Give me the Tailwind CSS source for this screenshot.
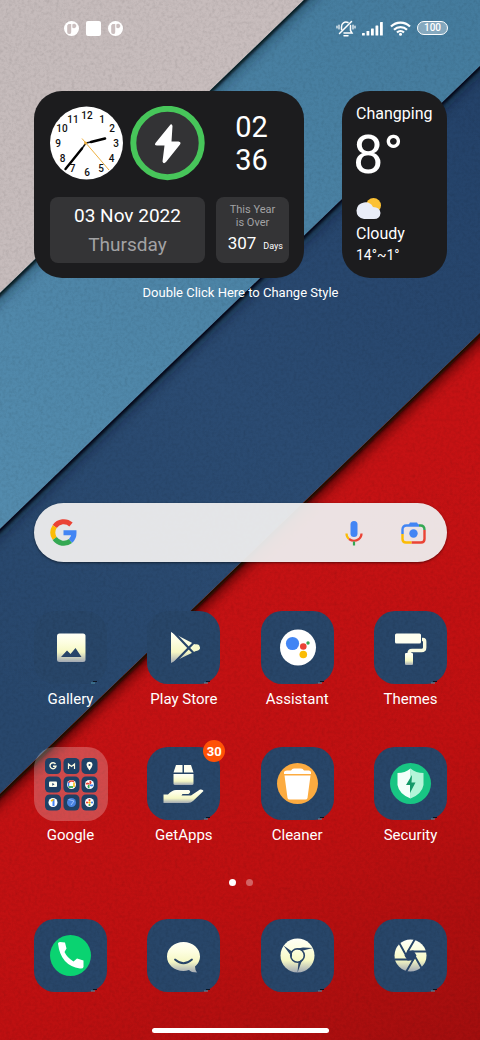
<!DOCTYPE html>
<html lang="en">
<head>
<meta charset="utf-8">
<meta name="viewport" content="width=device-width, initial-scale=1">
<title>Home screen</title>
<script src="https://cdn.jsdelivr.net/npm/@tailwindcss/browser@4"></script>
</head>
<body class="relative isolate flex min-h-screen flex-col overflow-x-hidden bg-[#b81012] font-['Roboto',sans-serif] text-white">

<!-- Wallpaper: layered paper sheets -->
<svg class="absolute inset-0 -z-10 h-full w-full" viewBox="0 0 480 1040" preserveAspectRatio="none" aria-hidden="true">
  <defs>
    <linearGradient id="beige" x1="0" y1="0" x2="1" y2="1"><stop offset="0" stop-color="#c5bbbb"/><stop offset="1" stop-color="#cfc2c2"/></linearGradient>
    <linearGradient id="blue" gradientUnits="userSpaceOnUse" x1="480" y1="0" x2="0" y2="500"><stop offset="0" stop-color="#447b9d"/><stop offset="1" stop-color="#538bad"/></linearGradient>
    <linearGradient id="navy" gradientUnits="userSpaceOnUse" x1="480" y1="100" x2="0" y2="700"><stop offset="0" stop-color="#244269"/><stop offset=".5" stop-color="#2b4b72"/><stop offset="1" stop-color="#28476c"/></linearGradient>
    <linearGradient id="red" gradientUnits="userSpaceOnUse" x1="200" y1="600" x2="480" y2="1040"><stop offset="0" stop-color="#c51214"/><stop offset=".5" stop-color="#be1011"/><stop offset="1" stop-color="#a20e0e"/></linearGradient>
    <linearGradient id="cream" x1="0" y1="0" x2="0" y2="1"><stop offset="0" stop-color="#fffff6"/><stop offset=".3" stop-color="#fdfee2"/><stop offset=".65" stop-color="#f6f8c4"/><stop offset="1" stop-color="#a2a9b4"/></linearGradient>
    <filter id="soft" x="-10%" y="-10%" width="120%" height="120%"><feGaussianBlur stdDeviation="7"/></filter>
    <filter id="thin" x="-10%" y="-10%" width="120%" height="120%"><feGaussianBlur stdDeviation="1.6"/></filter>
    <filter id="grain" x="0" y="0" width="100%" height="100%"><feTurbulence type="fractalNoise" baseFrequency=".32" numOctaves="3" seed="4"/><feColorMatrix values="0 0 0 0 0  0 0 0 0 0  0 0 0 0 0  .8 .8 0 0 -.68"/></filter>
    <clipPath id="cBlue"><path d="M304 0H480V66L0 529V293Z"/></clipPath>
    <clipPath id="cNavy"><path d="M480 66V333L0 794V529Z"/></clipPath>
    <clipPath id="cRed"><path d="M480 333V1040H0V794Z"/></clipPath>
    <g id="tile"><rect width="73" height="73" rx="21" fill="#284669"/><rect width="73" height="73" rx="21" filter="url(#grain)" clip-path="url(#cTile)" opacity=".15"/><path d="M59 70.500h4" stroke="#0b1320"/><path d="M57 72h4" stroke="#4f93a8"/></g>
    <clipPath id="cTile"><rect width="73" height="73" rx="21"/></clipPath>
  </defs>
  <rect width="480" height="1040" fill="url(#beige)"/>
  <g clip-path="url(#cBlue)"><rect width="480" height="600" fill="url(#blue)"/><path d="M324 -20L-20 312" stroke="#0c2433" stroke-width="8" filter="url(#soft)" opacity=".7"/><path d="M324 -19L-20 313" stroke="#05080c" stroke-width="4" filter="url(#thin)"/></g>
  <g clip-path="url(#cNavy)"><rect width="480" height="800" fill="url(#navy)"/><path d="M500 47L-20 548" stroke="#081527" stroke-width="8" filter="url(#soft)" opacity=".7"/><path d="M500 47L-20 549" stroke="#03060a" stroke-width="4" filter="url(#thin)"/></g>
  <g clip-path="url(#cRed)"><rect width="480" height="1040" fill="url(#red)"/><path d="M500 314L-20 813" stroke="#3a0606" stroke-width="12" filter="url(#soft)"/><path d="M500 314L-20 814" stroke="#180a06" stroke-width="5" filter="url(#thin)"/></g>
  <rect width="480" height="1040" filter="url(#grain)" opacity=".13"/>
</svg>

<header class="flex h-14 items-center justify-between pr-8 pl-16">
  <div class="flex items-center gap-[7px]">
    <svg class="size-[15px]" viewBox="0 0 15 15"><circle cx="7.500" cy="7.500" r="7.500" fill="#fff"/><path d="M4.500 3H7.200V11.200A2 2 0 0 1 3.200 11V4.500Z" fill="#cbbfbf"/><path d="M8.300 3.500Q9 2.500 10.500 2.700A2.300 2.300 0 1 1 8.300 6.500Z" fill="#cbbfbf"/></svg>
    <span class="size-[15px] rounded-xs bg-white"></span>
    <svg class="size-[15px]" viewBox="0 0 15 15"><circle cx="7.500" cy="7.500" r="7.500" fill="#fff"/><path d="M4.500 3H7.200V11.200A2 2 0 0 1 3.200 11V4.500Z" fill="#cbbfbf"/><path d="M8.300 3.500Q9 2.500 10.500 2.700A2.300 2.300 0 1 1 8.300 6.500Z" fill="#cbbfbf"/></svg>
  </div>
  <div class="flex items-center gap-[6px]">
    <svg class="h-[17px] w-5" viewBox="0 0 20 17" fill="none" stroke="#fff" stroke-width="1.500" stroke-linecap="round"><path d="M5.500 9.500V7A4.500 4.500 0 0 1 12 2.500M14.500 5.500V10.500L16 13H8M3.500 13.500L15.500 1.500M8 15.800H12"/><path stroke-width="1.200" d="M3 5V9M1 6V8M17 5V9M19 6V8"/></svg>
    <svg class="h-[15px] w-[22px]" viewBox="0 0 22 15" fill="#fff"><rect x="0" y="12" width="2.800" height="2.500" rx=".5"/><rect x="4.500" y="10" width="2.800" height="4.500" rx=".5"/><rect x="9" y="7.500" width="2.800" height="7" rx=".5"/><rect x="13.500" y="4.500" width="2.800" height="10" rx=".5"/><rect x="18" y="1" width="2.800" height="13.500" rx=".5"/></svg>
    <svg class="h-[15px] w-[21px]" viewBox="0 0 21 15" fill="none" stroke="#fff" stroke-width="2.200"><path d="M1 5.500A13.500 13.500 0 0 1 20 5.500M4 8.800A9.300 9.300 0 0 1 17 8.800M7 11.500A5 5 0 0 1 14 11.500"/><circle cx="10.500" cy="13.300" r="1.500" fill="#fff" stroke="none"/></svg>
    <span class="flex h-[14px] w-[31px] items-center justify-center rounded-full border border-white bg-white/35 text-[10px] leading-none font-medium">100</span>
  </div>
</header>

<main class="flex flex-1 flex-col pt-[35px] pr-[33px] pl-[34px]">
  <div class="flex justify-between">
    <section class="flex h-[187px] w-[270px] flex-col justify-between rounded-[28px] bg-[#1c1c1e] px-4 pt-[15px] pb-[15px]" aria-label="Clock and date">
      <div class="flex items-center">
        <svg class="size-[75px]" viewBox="0 0 75 75" font-family="Roboto" font-size="10" font-weight="500" text-anchor="middle" fill="#111">
          <circle cx="36.500" cy="37" r="36.500" fill="#fff"/>
          <text x="37" y="12.500">12</text><text x="52" y="16.500">1</text><text x="62" y="26">2</text><text x="66" y="41">3</text><text x="61.500" y="56">4</text><text x="51" y="66">5</text><text x="37" y="69.500">6</text><text x="22.500" y="66">7</text><text x="12.500" y="56">8</text><text x="8" y="41">9</text><text x="12" y="26">10</text><text x="23" y="16.500">11</text>
          <path d="M36 37L41 36" stroke="#111" stroke-width="1.500"/><path d="M41 36L55 32.500" stroke="#000" stroke-width="2.600" stroke-linecap="round"/>
          <path d="M36 37L32 42.500" stroke="#111" stroke-width="1.500"/><path d="M32 42.500L15.500 63" stroke="#000" stroke-width="2.400" stroke-linecap="round"/>
          <path d="M32 32.500L59 64" stroke="#eeb040" stroke-width="1"/><circle cx="35.500" cy="37" r="1.500" fill="#eeb040"/>
        </svg>
        <svg class="ml-[5px] size-[75px]" viewBox="0 0 75 75"><circle cx="37.500" cy="37" r="34.200" fill="#333335" stroke="#47c65a" stroke-width="6"/><path d="M40.500 18.500L25.500 37Q24 39.500 27 39.500H34.500L32.500 55.500Q33.500 58.500 36 56L50 38.500Q51.500 36 48.500 35.500H41.500L42.500 20Q42 17.500 40.500 18.500Z" fill="#fff"/></svg>
        <div class="ml-[10px] flex-1 text-center text-[29px] leading-[33px]"><div>02</div><div>36</div></div>
      </div>
      <div class="flex gap-[11px]">
        <div class="flex h-[66px] w-[155px] flex-none flex-col items-center justify-center rounded-lg bg-[#343436] text-[19px] leading-[29px]"><span>03 Nov 2022</span><span class="text-[#a2a2a4]">Thursday</span></div>
        <div class="flex h-[66px] w-[73px] flex-none flex-col items-center rounded-lg bg-[#343436] pt-[6px] text-[11px] leading-[13px] text-[#a2a2a4]"><span>This Year</span><span>is Over</span><div class="flex items-baseline gap-[7px] self-end pr-[6px] text-[17px] leading-[28px] text-white"><span>307</span><span class="text-[9px]">Days</span></div></div>
      </div>
    </section>
    <section class="flex h-[187px] w-[105px] flex-col rounded-[28px] bg-[#1c1c1e] pt-[13px] pl-[14px]" aria-label="Weather">
      <span class="text-base leading-5">Changping</span>
      <span class="-ml-[3px] text-[54px] leading-[62px]">8°</span>
      <svg class="mt-[12px] h-[22px] w-[27px]" viewBox="0 0 27 22"><circle cx="17.500" cy="7.500" r="7.500" fill="#fcc134"/><path d="M8 4.500Q14 3.500 17 9Q24 9 24.500 15Q24 21 18 21H8Q.5 20 .5 12.500Q1 5.500 8 4.500Z" fill="#e9edf8"/></svg>
      <span class="mt-[4px] text-base leading-5">Cloudy</span>
      <span class="text-sm leading-[22px]">14°~1°</span>
    </section>
  </div>
  <p class="mt-[5px] text-center text-[13px] leading-5">Double Click Here to Change Style</p>

  <div role="search" class="mt-[200px] flex h-[59px] items-center rounded-[30px] bg-[#eeeeee]/95 pr-5 pl-4 shadow-sm shadow-black/40">
    <svg class="size-[27px]" viewBox="0 0 27 27" fill="none" stroke-width="5"><path d="M4.700 7.500A11 11 0 0 1 21 5.500" stroke="#ea4335"/><path d="M4.700 7.500A11 11 0 0 0 4.700 19.500" stroke="#fbbc05"/><path d="M4.700 19.500A11 11 0 0 0 20.500 22" stroke="#34a853"/><path d="M13.500 13.700H24A11 11 0 0 1 20.500 22" stroke="#4285f4"/></svg>
    <input type="search" aria-label="Search" class="min-w-0 flex-1 bg-transparent px-3 text-base text-[#222] outline-none">
    <button aria-label="Voice search"><svg class="h-[26px] w-[18px]" viewBox="0 0 18 26" fill="none" stroke-width="2.200"><rect x="5.500" y="1" width="7" height="16" rx="3.500" fill="#4285f4"/><path d="M1.500 13.500Q1.500 17 4 19" stroke="#fbbc05"/><path d="M4 19Q9 22.500 14 19Q16.500 17 16.500 13.500" stroke="#ea4335"/><path d="M9 21.500V25.500" stroke="#34a853"/></svg></button>
    <button aria-label="Search with camera" class="ml-[37px]"><svg class="h-6 w-[27px]" viewBox="0 0 27 24" fill="none" stroke-width="2.400"><path d="M2.500 13V8.500Q2.500 4.500 6.500 4.500H19" stroke="#4285f4"/><path d="M8 5L10 1.500H17L19 5Z" fill="#4285f4"/><path d="M19 4.500H20.500Q24.500 4.500 24.500 9" stroke="#34a853"/><path d="M24.500 9V18Q24.500 21.500 21 21.500H11.500" stroke="#ea4335"/><path d="M2.500 13V18Q2.500 21.500 6 21.500H11.500" stroke="#fbbc05"/><circle cx="13.500" cy="12.500" r="4.200" fill="#4285f4"/></svg></button>
  </div>

  <nav aria-label="Apps" class="mt-[49px] flex flex-col gap-[38px] text-[15px] leading-5">
    <div class="flex justify-between">
      <button class="flex w-[73px] flex-col items-center gap-[5px] whitespace-nowrap"><svg class="size-[73px]" viewBox="0 0 73 73"><use href="#tile"/><rect x="23" y="22.500" width="28.500" height="28.500" rx="2.500" fill="url(#cream)"/><path d="M27 46L33 39.500L36.500 43L41.500 37L47.500 46Z" fill="#284569"/></svg><span>Gallery</span></button>
      <button class="flex w-[73px] flex-col items-center gap-[5px] whitespace-nowrap"><svg class="size-[73px]" viewBox="0 0 73 73"><use href="#tile"/><path d="M24 21L52 35.500Q54 37 52 38.500L24 52Z" fill="url(#cream)"/><circle cx="49.500" cy="36.500" r="3.200" fill="#f7f9cb"/><path d="M26 20.500L46.500 42M26.500 52.500L47 31.500" stroke="#284569" stroke-width="2.200" fill="none"/></svg><span>Play Store</span></button>
      <button class="flex w-[73px] flex-col items-center gap-[5px] whitespace-nowrap"><svg class="size-[73px]" viewBox="0 0 73 73"><use href="#tile"/><circle cx="37" cy="36.500" r="18" fill="#fff"/><circle cx="31.500" cy="32.500" r="6.600" fill="#4285f4"/><circle cx="42.300" cy="35.500" r="3.300" fill="#ea4335"/><circle cx="47" cy="32" r="1.700" fill="#34a853"/><circle cx="42.300" cy="43.500" r="3.800" fill="#fbbc05"/></svg><span>Assistant</span></button>
      <button class="flex w-[73px] flex-col items-center gap-[5px] whitespace-nowrap"><svg class="size-[73px]" viewBox="0 0 73 73"><use href="#tile"/><rect x="21" y="22.500" width="26" height="10" rx="1.500" fill="#fffff0"/><path d="M48 28.500H49Q50.700 28.500 50.700 30.500V36.500Q50.700 39.500 47.500 39.500H38Q35 39.500 35 43" fill="none" stroke="#f9fadf" stroke-width="3.400"/><rect x="31" y="42" width="8" height="12" rx="1" fill="url(#cream)"/></svg><span>Themes</span></button>
    </div>
    <div class="flex justify-between">
      <button class="flex w-[73px] flex-col items-center gap-[5px] whitespace-nowrap"><svg class="size-[73px] overflow-visible" viewBox="0 0 73 73"><rect width="74" height="74" rx="21" fill="#fff" fill-opacity=".24"/>
        <g fill="#1f4166"><rect x="11" y="11" width="16" height="16" rx="4.500"/><rect x="29.500" y="11" width="16" height="16" rx="4.500"/><rect x="47.500" y="11" width="16" height="16" rx="4.500"/><rect x="11" y="29.500" width="16" height="16" rx="4.500"/><rect x="29.500" y="29.500" width="16" height="16" rx="4.500"/><rect x="47.500" y="29.500" width="16" height="16" rx="4.500"/><rect x="11" y="47.500" width="16" height="16" rx="4.500"/><rect x="29.500" y="47.500" width="16" height="16" rx="4.500"/><rect x="47.500" y="47.500" width="16" height="16" rx="4.500"/></g>
        <path d="M21.500 17A3 3 0 1 0 22 19.200H19" fill="none" stroke="#f8f9e0" stroke-width="1.400"/><path d="M34.500 22V17L37.500 19.500L40.500 17V22" fill="none" stroke="#f8f9e0" stroke-width="1.200"/><path d="M55.500 23.500Q52.500 20 52.500 17.800A3 3 0 0 1 58.500 17.800Q58.500 20 55.500 23.500Z" fill="#fffff0"/><circle cx="55.500" cy="18" r="1" fill="#1f4166"/>
        <rect x="15" y="34.500" width="8" height="5.500" rx="1" fill="#fffff0"/><path d="M18.300 36V38.700L20.500 37.300Z" fill="#1f4166"/>
        <circle cx="37.500" cy="37.500" r="4.500" fill="#fff"/><path d="M34.500 36A4 4 0 0 1 40 34.500" stroke="#ea4335" stroke-width="1.500" fill="none"/><path d="M34.500 35.500V39.500" stroke="#4285f4" stroke-width="1.500"/><path d="M34.500 40H39" stroke="#34a853" stroke-width="1.800"/><path d="M40 35.500V40" stroke="#fbbc05" stroke-width="1.500"/>
        <circle cx="55.500" cy="37.500" r="4.500" fill="#fff"/><path d="M55.500 37.500V33.500A2 2 0 0 1 55.500 37.500Z" fill="#ea4335"/><path d="M55.500 37.500H59.500A2 2 0 0 1 55.500 37.500Z" fill="#4285f4"/><path d="M55.500 37.500V41.500A2 2 0 0 1 55.500 37.500Z" fill="#34a853"/><path d="M55.500 37.500H51.500A2 2 0 0 1 55.500 37.500Z" fill="#ea4335"/>
        <circle cx="19" cy="55.500" r="4.500" fill="#fff"/><path d="M19.500 52V59" stroke="#4285f4" stroke-width="2"/><path d="M17 54L19.500 52.500" stroke="#fbbc05" stroke-width="1.500"/>
        <circle cx="37.500" cy="55.500" r="4.500" fill="#4a83e0"/><path d="M34.500 52.500L40 54L37 58" stroke="#9fc1fb" fill="none"/>
        <circle cx="55.500" cy="55.500" r="4.500" fill="#fff"/><circle cx="55.500" cy="53" r="1.100" fill="#ea4335"/><circle cx="58" cy="55.500" r="1.100" fill="#4285f4"/><circle cx="55.500" cy="58" r="1.100" fill="#34a853"/><circle cx="53" cy="55.500" r="1.100" fill="#ea4335"/><circle cx="55.500" cy="55.500" r="1.200" fill="#fbbc05"/></svg><span>Google</span></button>
      <button class="relative flex w-[73px] flex-col items-center gap-[5px] whitespace-nowrap"><svg class="size-[73px]" viewBox="0 0 73 73"><use href="#tile"/><path d="M29 18H35.500V25.500H26.500ZM37 18H44L46.500 25.500H37Z" fill="#fffff0"/><path d="M26.500 27H46.500V36.500Q46.500 38 45 38H28Q26.500 38 26.500 36.500Z" fill="url(#cream)"/><path d="M16.500 47.500H21Q25 43 29 43H42Q44.500 45 41.500 47H35.500L34.500 48.500H44L53 42.500Q56 42 56.500 44L46 54Q44 56 41 56H16.500Z" fill="url(#cream)"/></svg><span>GetApps</span><span class="absolute -top-[7px] -right-[5px] flex size-[22px] items-center justify-center rounded-full bg-[#ff5206] text-[13px] leading-none font-bold">30</span></button>
      <button class="flex w-[73px] flex-col items-center gap-[5px] whitespace-nowrap"><svg class="size-[73px]" viewBox="0 0 73 73"><use href="#tile"/><circle cx="36.500" cy="36.500" r="20.500" fill="#fcab40"/><path d="M23 27V25Q23.500 23.500 26 23.500H30Q31 21.500 33 21.500H40Q42 21.500 43 23.500H48Q50 24 50 25.500V27ZM23.500 28.500H49.500L46.500 51Q46 52.500 44.500 52.500H28.500Q27 52.500 26.500 51Z" fill="#fff"/></svg><span>Cleaner</span></button>
      <button class="flex w-[73px] flex-col items-center gap-[5px] whitespace-nowrap"><svg class="size-[73px]" viewBox="0 0 73 73"><use href="#tile"/><circle cx="36.500" cy="36.500" r="20.500" fill="#18c583"/><path d="M36.500 21.500Q42 26 49.500 26V38Q48 47 36.500 51.500Z" fill="#b4f5d8"/><path d="M36.500 21.500Q31 26 23.500 26V38Q25 47 36.500 51.500Z" fill="#f4fffa"/><path d="M38 28L32 38H36V46L41.500 35.500H37.500Z" fill="#159a69"/></svg><span>Security</span></button>
    </div>
  </nav>

  <div class="mt-[34px] flex items-center justify-center gap-[10px]" aria-label="Page 1 of 2"><span class="size-[7px] rounded-full bg-white"></span><span class="size-[7px] rounded-full bg-white/35"></span></div>

  <nav aria-label="Dock" class="mt-[33px] flex justify-between">
    <button aria-label="Phone"><svg class="size-[73px]" viewBox="0 0 73 73"><use href="#tile"/><circle cx="36.500" cy="36.500" r="20.500" fill="#0ad371"/><path d="M24 24.500Q24 23 26 23L31 23.500L32.500 29.500L30.500 33Q33 38.500 39.500 42.500L43 39.500L49.500 41.500V48Q49 50 46 49.500Q26.500 46.500 24 24.500Z" fill="#fff"/></svg></button>
    <button aria-label="Messages"><svg class="size-[73px]" viewBox="0 0 73 73"><use href="#tile"/><path d="M36.500 23C46 23 53 29.500 53 37.500C53 42 50.500 45.500 48 47.500Q48 51 50 53.500Q44 53.500 42 51Q39 52 36.500 52C27 52 20 45.500 20 37.500S27 23 36.500 23Z" fill="url(#cream)"/><path d="M28 40.500Q36.500 48 45 40.500" stroke="#284569" stroke-width="1.800" fill="none" stroke-linecap="round"/></svg></button>
    <button aria-label="Chrome"><svg class="size-[73px]" viewBox="0 0 73 73"><use href="#tile"/><circle cx="36.500" cy="36.500" r="17" fill="url(#cream)"/><circle cx="36.500" cy="36.500" r="6.800" fill="none" stroke="#284569" stroke-width="1.600"/><path d="M34 30L42 28.500L52 29L42 31.500ZM31 38.500L28 34L22.500 26.500L31 32.500ZM42.500 39L40 44L36.500 53.500L37.500 43Z" fill="#284569"/></svg></button>
    <button aria-label="Camera"><svg class="size-[73px]" viewBox="0 0 73 73"><use href="#tile"/><circle cx="36.500" cy="36.500" r="16" fill="url(#cream)"/><path d="M33.500 31.500H39.500L42.500 36.500L39.500 41.500H33.500L30.500 36.500Z" fill="#284569"/><path d="M41 20L33.500 33M52.500 32.500H37.500M47.500 49L39.500 35M32 53L40.500 38.500M20.500 40.500H35.500M25 23.500L33 38" stroke="#284569" stroke-width="1.900"/></svg></button>
  </nav>
  <div class="mx-auto mt-auto mb-[7px] h-[5px] w-[177px] rounded-full bg-white"></div>
</main>
</body>
</html>
